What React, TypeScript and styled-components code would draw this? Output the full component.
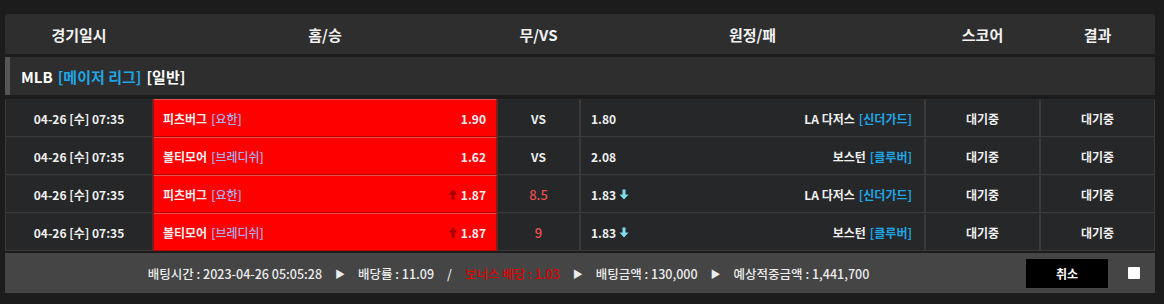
import * as React from 'react';
import styled, { createGlobalStyle } from 'styled-components';

const GlobalStyle = createGlobalStyle`
    html, body {
        margin: 0;
        padding: 0;
        background: #1c1c1c;
        font-family: "Noto Sans CJK KR", "Noto Sans", sans-serif;
        color: #fff;
    }
`;

const COLUMNS = '148px 344px 83px 345px 115px 115px';

const Panel = styled.div`
    width: 1150px;
    margin: 14px 0 0 5px;
    display: flex;
    flex-direction: column;
`;

const HeaderRow = styled.div`
    display: grid;
    grid-template-columns: ${COLUMNS};
    height: 40px;
    background: #2e2e2e;
    border-radius: 3px 3px 0 0;
    margin-bottom: 3px;
    div {
        display: flex;
        align-items: center;
        justify-content: center;
        font-size: 15px;
        font-weight: 700;
        color: #f2f2f2;
    }
`;

const League = styled.div`
    height: 38px;
    background: #2e2e2e;
    border-left: 5px solid #555;
    display: flex;
    align-items: center;
    padding-left: 11px;
    font-size: 15px;
    font-weight: 700;
    margin-bottom: 4px;
    gap: 5px;
    .blue {
        color: #1fa6e6;
    }
`;

const Row = styled.div`
    display: grid;
    grid-template-columns: ${COLUMNS};
    height: 38px;
`;

const Cell = styled.div<{ align?: string }>`
    display: flex;
    align-items: center;
    justify-content: ${({ align }) => align || 'center'};
    background: #262728;
    border: 1px solid #3a3a3a;
    border-top-color: #2b2b2b;
    font-size: 12px;
    font-weight: 700;
    padding: 0 11px;
    box-sizing: border-box;
    color: #f0f0f0;
`;

const HomeCell = styled(Cell)`
    background: #ff0000;
    border: 1px solid #b80000;
    border-top-color: #e85050;
    justify-content: space-between;
    padding: 0 10px 0 9px;
    .sub {
        color: #a8b0ec;
        margin-left: 4px;
        font-weight: 500;
    }
`;

const AwayCell = styled(Cell)`
    justify-content: space-between;
    padding: 0 12px 0 10px;
    .sub {
        color: #1fa6e6;
        margin-left: 4px;
    }
`;

const DrawValue = styled.span<{ handicap: boolean }>`
    color: ${({ handicap }) => (handicap ? '#e8514f' : '#f0f0f0')};
    font-weight: ${({ handicap }) => (handicap ? 500 : 700)};
    font-size: ${({ handicap }) => (handicap ? '13px' : '12px')};
`;

const Odds = styled.span`
    display: flex;
    align-items: center;
    gap: 3px;
`;

const Footer = styled.div`
    margin-top: 2px;
    height: 40px;
    background: #454545;
    display: flex;
    align-items: center;
`;

const Summary = styled.div`
    flex: 1;
    display: flex;
    justify-content: center;
    align-items: center;
    font-size: 12.5px;
    font-weight: 500;
    color: #ececec;
    gap: 13px;
    .red {
        color: #e00000;
    }
    .tri {
        font-size: 10px;
    }
`;

const CancelButton = styled.button`
    width: 82px;
    height: 29px;
    background: #000;
    border: none;
    color: #fff;
    font-family: inherit;
    font-size: 12px;
    font-weight: 700;
    margin-right: 20px;
    margin-left: 14px;
`;

const Check = styled.div`
    width: 12px;
    height: 12px;
    background: #fff;
    border-radius: 1px;
    margin-right: 15px;
`;

const ArrowUp = () => (
    <svg width="10" height="11" viewBox="0 0 10 11">
        <path d="M5 0.5 L9.5 5.5 L6.5 5.5 L6.5 10.5 L3.5 10.5 L3.5 5.5 L0.5 5.5 Z" fill="#a80000" />
    </svg>
);

const ArrowDown = () => (
    <svg width="10" height="11" viewBox="0 0 10 11">
        <path d="M5 10.5 L9.5 5.5 L6.5 5.5 L6.5 0.5 L3.5 0.5 L3.5 5.5 L0.5 5.5 Z" fill="#7fdcec" />
    </svg>
);

interface Game {
    home: string;
    homeSub: string;
    homeOdds: string;
    draw: string;
    away: string;
    awaySub: string;
    awayOdds: string;
    moved?: boolean;
}

const games: Game[] = [
    { home: '피츠버그', homeSub: '[요한]', homeOdds: '1.90', draw: 'VS', away: 'LA 다저스', awaySub: '[신더가드]', awayOdds: '1.80' },
    { home: '볼티모어', homeSub: '[브레디쉬]', homeOdds: '1.62', draw: 'VS', away: '보스턴', awaySub: '[클루버]', awayOdds: '2.08' },
    { home: '피츠버그', homeSub: '[요한]', homeOdds: '1.87', draw: '8.5', away: 'LA 다저스', awaySub: '[신더가드]', awayOdds: '1.83', moved: true },
    { home: '볼티모어', homeSub: '[브레디쉬]', homeOdds: '1.87', draw: '9', away: '보스턴', awaySub: '[클루버]', awayOdds: '1.83', moved: true },
];

export default function App() {
    return (
        <>
            <GlobalStyle />
            <Panel>
                <HeaderRow>
                    <div>경기일시</div>
                    <div>홈/승</div>
                    <div>무/VS</div>
                    <div>원정/패</div>
                    <div>스코어</div>
                    <div>결과</div>
                </HeaderRow>
                <League>
                    <span>MLB</span>
                    <span className="blue">[메이저 리그]</span>
                    <span>[일반]</span>
                </League>
                {games.map((g, i) => (
                    <Row key={i}>
                        <Cell>04-26 [수] 07:35</Cell>
                        <HomeCell>
                            <span>
                                {g.home}
                                <span className="sub">{g.homeSub}</span>
                            </span>
                            <Odds>
                                {g.moved && <ArrowUp />}
                                {g.homeOdds}
                            </Odds>
                        </HomeCell>
                        <Cell>
                            <DrawValue handicap={g.draw !== 'VS'}>{g.draw}</DrawValue>
                        </Cell>
                        <AwayCell>
                            <Odds>
                                {g.awayOdds}
                                {g.moved && <ArrowDown />}
                            </Odds>
                            <span>
                                {g.away}
                                <span className="sub">{g.awaySub}</span>
                            </span>
                        </AwayCell>
                        <Cell>대기중</Cell>
                        <Cell>대기중</Cell>
                    </Row>
                ))}
                <Footer>
                    <Summary>
                        <span>배팅시간 : 2023-04-26 05:05:28</span>
                        <span className="tri">▶</span>
                        <span>배당률 : 11.09</span>
                        <span>/</span>
                        <span className="red">보너스 배당 : 1.03</span>
                        <span className="tri">▶</span>
                        <span>배팅금액 : 130,000</span>
                        <span className="tri">▶</span>
                        <span>예상적중금액 : 1,441,700</span>
                    </Summary>
                    <CancelButton>취소</CancelButton>
                    <Check />
                </Footer>
            </Panel>
        </>
    );
}
